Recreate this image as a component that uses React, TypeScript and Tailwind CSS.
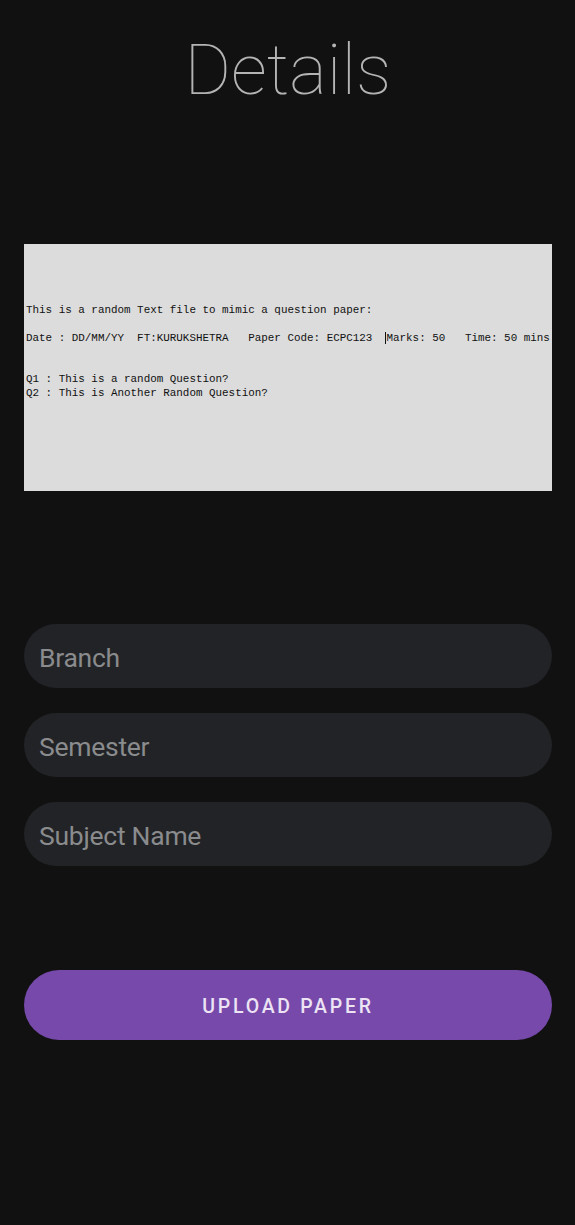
export default function App() {
    return (
        <div className="min-h-[1225px] w-full bg-[#111111] pr-[23px] pl-6 font-['Roboto',sans-serif]">
            {/* Title */}
            <h1 className="pt-[26px] text-center text-[71px] leading-[88px] font-thin text-[#b4b4b4]">
                Details
            </h1>

            {/* Paper preview */}
            <div className="mt-[130px] flex h-[247px] flex-col bg-[#dcdcdc] px-[2px] font-['Liberation_Mono',monospace] text-[10.9px] leading-[14px] whitespace-pre text-[#111]">
                <p className="mt-[59px]">This is a random Text file to mimic a question paper:</p>
                <p className="mt-[14px]">
                    Date : DD/MM/YY  FT:KURUKSHETRA   Paper Code: ECPC123  <span className="border-l border-[#111]">Marks: 50   Time: 50 mins</span>
                </p>
                <p className="mt-[27px]">Q1 : This is a random Question?</p>
                <p>Q2 : This is Another Random Question?</p>
            </div>

            {/* Inputs */}
            <div className="mt-[133px] flex flex-col gap-[25px]">
                {['Branch', 'Semester', 'Subject Name'].map((label) => (
                    <input
                        key={label}
                        placeholder={label}
                        className="h-16 w-full rounded-full bg-[#222326] px-[15px] pt-[2px] text-[26.5px] tracking-[-0.01em] text-[#ddd] outline-none placeholder:text-[#8a8b8d]"
                    />
                ))}
            </div>

            {/* Upload */}
            <button className="mt-[104px] h-[70px] w-full rounded-full bg-[#7649ab] pt-[3px] text-[19.5px] font-medium tracking-[0.14em] text-[#ece3f3]">
                UPLOAD PAPER
            </button>
        </div>
    );
}
